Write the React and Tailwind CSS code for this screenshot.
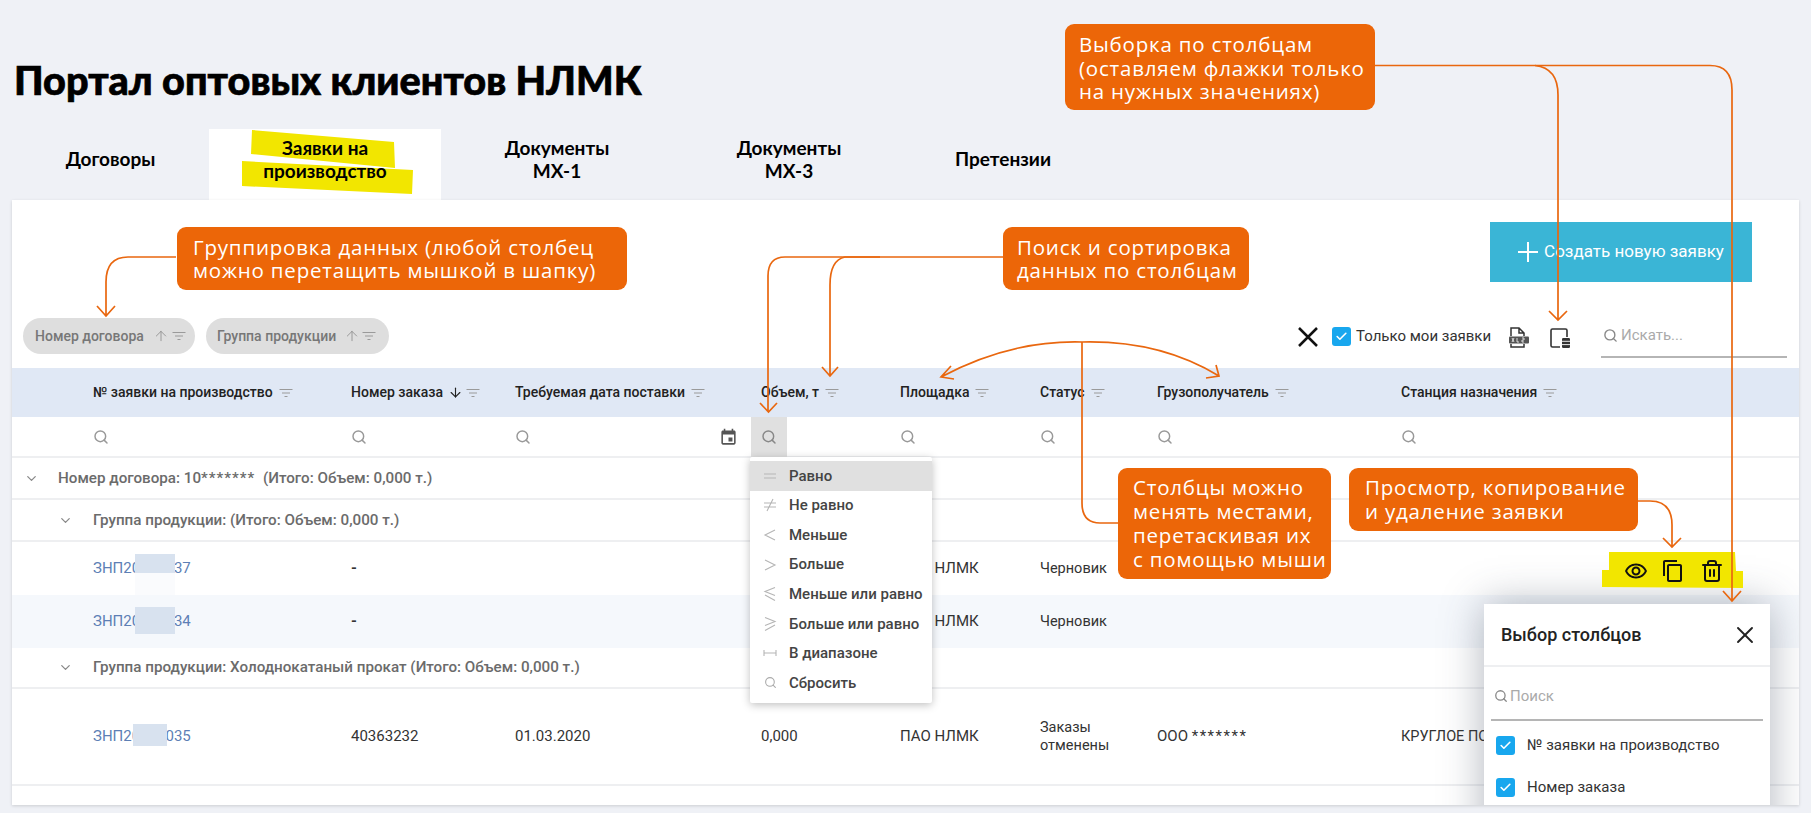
import React from 'react';
import { Search, ChevronDown, X, Check, ArrowUp, ArrowDown, Trash2 } from 'lucide-react';

const COLS = 'grid grid-cols-[81px_258px_164px_246px_139px_140px_117px_244px_398px]';

const FilterIcon = ({ className = '' }) => (
  <svg width="14" height="10" viewBox="0 0 14 10" className={className} fill="none" stroke="#9a9a9a" strokeWidth="1">
    <path d="M0.5 1.5h13M3 5h8M5.5 8.5h3" />
  </svg>
);

const Tick = ({ size }) => (
  <span className="flex items-center justify-center rounded-[3px] bg-[#18a7ee]" style={{ width: size, height: size }}>
    <Check size={size - 6} color="#fff" strokeWidth={3} />
  </span>
);

const Callout = ({ className, children }) => (
  <div className={`absolute rounded-[9px] bg-[#ec6608] text-white text-[20.5px] tracking-[0.8px] font-['Open_Sans',sans-serif] whitespace-pre ${className}`}>{children}</div>
);

const FilterCell = () => (
  <div className="flex items-center"><Search size={16} color="#999" strokeWidth={2.2} /></div>
);

const tabs = [
  { w: 'w-[197px]', label: 'Договоры' },
  { w: 'w-[232px]', label: 'Заявки на\nпроизводство', active: true },
  { w: 'w-[232px]', label: 'Документы\nМХ-1' },
  { w: 'w-[232px]', label: 'Документы\nМХ-3' },
  { w: 'w-[196px]', label: 'Претензии' },
];

const headers = [
  ['№ заявки на производство'],
  ['Номер заказа', true],
  ['Требуемая дата поставки'],
  ['Объем, т'],
  ['Площадка'],
  ['Статус'],
  ['Грузополучатель'],
  ['Станция назначения'],
];

const menu = [
  ['M1 5H13M1 9H13', 'Равно'],
  ['M1 5H13M1 9H13M10 1L4 13', 'Не равно'],
  ['M12 2L2 7L12 12', 'Меньше'],
  ['M2 2L12 7L2 12', 'Больше'],
  ['M12 0.500L2 4.500L12 8.500M2 8L12 13.500', 'Меньше или равно'],
  ['M2 0.500L12 4.500L2 8.500M12 8L2 13.500', 'Больше или равно'],
  ['M1 4V10M13 4V10M1 7H13', 'В диапазоне'],
  [null, 'Сбросить'],
];

const GroupRow = ({ indent, children, className }) => (
  <div className={`flex items-center text-[15.2px] font-medium text-[#6b6b6b] border-b-2 border-[#eeeff1] ${className}`}>
    <ChevronDown size={15} color="#888" className={indent ? 'ml-[46px] mr-[20px]' : 'ml-[12px] mr-[19px]'} />
    <span className="whitespace-pre">{children}</span>
  </div>
);

const DataRow = ({ num, patch, order, date, volume, status, cons, station, className = '' }) => (
  <div className={`${COLS} items-center text-[15px] text-[#333] ${className}`}>
    <div />
    <div className="relative text-[#5d7fb5]">
      <span>{num}</span>
      <span className={`absolute ${patch}`} />
    </div>
    <div className={order === '-' ? 'font-bold' : ''}>{order}</div>
    <div>{date}</div>
    <div>{volume}</div>
    <div>ПАО НЛМК</div>
    <div className="text-[14.5px] leading-[18px]">{status}</div>
    <div>{cons}</div>
    <div className="text-[14.5px]">{station}</div>
  </div>
);

export default function App() {
  return (
    <div className="relative w-[1811px] h-[813px] overflow-hidden bg-[#eff1f6] font-['Roboto',sans-serif]">
      <h1 className="pl-[14px] pt-[54px] h-[129px] text-[39.6px] leading-[52px] font-black text-black font-['Lato',sans-serif] [-webkit-text-stroke:0.7px_black]">
        Портал оптовых клиентов НЛМК
      </h1>

      {/* Tabs */}
      <div className="flex ml-[12px] h-[71px]">
        {tabs.map((t) => (
          <div
            key={t.label}
            className={`${t.w} relative flex items-center justify-center pb-[12px] text-center whitespace-pre-line text-[19px] leading-[23px] font-bold text-black font-['Lato',sans-serif] ${t.active ? 'bg-white' : ''}`}
          >
            {t.active && (
              <svg className="absolute left-0 top-0" width="232" height="71">
                <path d="M43 1L185 13L186 39L42 25ZM33 32L204 41L203 65L33 57Z" fill="#f2e600" />
              </svg>
            )}
            <span className="relative">{t.label}</span>
          </div>
        ))}
      </div>

      {/* Panel */}
      <div className="relative ml-[12px] w-[1787px] h-[605px] bg-white overflow-hidden shadow-[0_1px_3px_rgba(0,0,0,0.15)]">
        <div className="flex justify-end pt-[22px] pr-[47px]">
          <button className="flex items-center justify-center gap-[6px] w-[262px] h-[60px] bg-[#3ab5d6] text-white text-[17px]">
            <svg width="20" height="20" viewBox="0 0 20 20" stroke="#fff" strokeWidth="2"><path d="M10 0V20M0 10H20" /></svg>
            Создать новую заявку
          </button>
        </div>

        <div className="flex items-start justify-between h-[86px] pt-[36px] pl-[11px]">
          <div className="flex gap-[11px]">
            <div className="flex items-center h-[36px] w-[172px] pl-[12px] rounded-full bg-[#dedede] text-[14px] font-medium text-[#777]">
              Номер договора
              <ArrowUp size={16} strokeWidth={1.2} color="#888" className="ml-[9px]" />
              <FilterIcon className="ml-[3px]" />
            </div>
            <div className="flex items-center h-[36px] w-[183px] pl-[11px] rounded-full bg-[#dedede] text-[14px] font-medium text-[#777]">
              Группа продукции
              <ArrowUp size={16} strokeWidth={1.2} color="#888" className="ml-[8px]" />
              <FilterIcon className="ml-[2px]" />
            </div>
          </div>

          <div className="flex items-start pr-[12px]">
            <svg width="20" height="20" viewBox="0 0 20 20" stroke="#111" strokeWidth="2.500" className="mt-[9px]">
              <path d="M1 1L19 19M19 1L1 19" />
            </svg>
            <div className="ml-[14px] mt-[9px]"><Tick size={19} /></div>
            <span className="ml-[5px] mt-[9px] text-[15px] leading-[19px] text-[#333] w-[135px] whitespace-nowrap">Только мои заявки</span>
            <svg className="ml-[17px] mt-[9px]" width="22" height="22" viewBox="0 0 22 22" fill="none" stroke="#333" strokeWidth="1.5">
              <path d="M3 9V1h8l5 5v3M16 17v3H3v-3M11 1v5h5" />
              <rect x="1" y="9.5" width="20" height="7" rx="1" fill="#555" stroke="none" />
              <path d="M4 11l2 4M6 11l-2 4M9 11v4h2M14 11h2v2h-2v2h2" stroke="#fff" strokeWidth="0.8" />
            </svg>
            <svg className="ml-[19px] mt-[9px]" width="22" height="22" viewBox="0 0 22 22" fill="none" stroke="#333" strokeWidth="1.6">
              <path d="M11 20H3.5A1.5 1.5 0 0 1 2 18.500V3.500A1.500 1.500 0 0 1 3.500 2H16.500A1.500 1.500 0 0 1 18 3.500V10" />
              <rect x="13" y="11" width="8" height="10" rx="1.200" fill="#333" stroke="none" />
              <path d="M13 14.300h8M13 17.600h8" stroke="#fff" strokeWidth="0.9" />
            </svg>
            <div className="ml-[30px] w-[186px] h-[40px] border-b-2 border-[#b5b5b5] flex items-center gap-[3px] pl-[2px] pb-[4px] text-[15px] text-[#aaa]">
              <Search size={15} color="#888" strokeWidth={2.2} />
              Искать...
            </div>
          </div>
        </div>

        {/* Table head */}
        <div className={`${COLS} items-center h-[49px] bg-[#e0e8f5] text-[14px] font-medium text-[#222]`}>
          <div />
          {headers.map(([label, sorted]) => (
            <div key={label} className="flex items-center">
              <span>{label}</span>
              {sorted && <ArrowDown size={15} strokeWidth={1.8} className="ml-[5px]" />}
              <FilterIcon className={sorted ? 'ml-[3px]' : 'ml-[6px]'} />
            </div>
          ))}
        </div>

        {/* Filter row */}
        <div className={`${COLS} h-[41px] border-b-2 border-[#eeeff1]`}>
          <div />
          <FilterCell />
          <FilterCell />
          <div className="flex items-center justify-between pr-[23px]">
            <Search size={16} color="#999" strokeWidth={2.2} />
            <svg width="19" height="19" viewBox="0 0 24 24" fill="#555">
              <path d="M17 12h-5v5h5v-5zM16 1v2H8V1H6v2H5c-1.110 0-1.990.9-1.990 2L3 19c0 1.100.89 2 2 2h14c1.100 0 2-.9 2-2V5c0-1.100-.9-2-2-2h-1V1h-2zm3 18H5V8h14v11z" />
              <rect x="4" y="4" width="16" height="4" />
            </svg>
          </div>
          <div className="flex items-center">
            <div className="flex items-center justify-center w-[36px] h-[40px] -ml-[10px] bg-[#e0e0e0]"><Search size={16} color="#888" strokeWidth={2.2} /></div>
          </div>
          <FilterCell />
          <FilterCell />
          <FilterCell />
          <FilterCell />
        </div>

        <GroupRow className="h-[42px]">
          <span className="inline-block w-[205px]">Номер договора: 10<span className="tracking-[1px]">*******</span></span>
          (Итого: Объем: 0,000 т.)
        </GroupRow>
        <GroupRow indent className="h-[42px] border-b">Группа продукции: (Итого: Объем: 0,000 т.)</GroupRow>
        <DataRow className="h-[53px]" num="ЗНП20000037" patch="left-[42px] -top-[3px] w-[40px] h-[41px] bg-[linear-gradient(#d8e2ef_0_19px,#fafbfd_19px)]" order="-" status="Черновик" />
        <DataRow className="h-[53px] bg-[#f5f8fc]" num="ЗНП20000034" patch="left-[42px] -top-[3px] w-[40px] h-[27px] bg-[#d8e2ef]" order="-" status="Черновик" />
        <GroupRow indent className="h-[41px] border-b">Группа продукции: Холоднокатаный прокат (Итого: Объем: 0,000 т.)</GroupRow>
        <DataRow
          className="h-[97px] border-b-2 border-[#eeeff1]"
          num="ЗНП20000035"
          patch="left-[40px] -top-[1px] w-[34px] h-[22px] bg-[#d8e2ef]"
          order="40363232"
          date="01.03.2020"
          volume="0,000"
          status={<>Заказы<br />отменены</>}
          cons={<>ООО <span className="tracking-[1.5px]">*******</span></>}
          station="КРУГЛОЕ ПОЛУФАБРИКАТ"
        />

        {/* Column chooser */}
        <div className="absolute left-[1472px] top-[404px] w-[286px] h-[260px] bg-white shadow-[0_0_40px_rgba(60,70,90,0.4)]">
          <div className="flex items-center justify-between h-[63px] pl-[17px] pr-[11px] border-b-2 border-[#eeeff1] text-[18px] font-medium text-[#222]">
            Выбор столбцов
            <X size={28} strokeWidth={1.6} color="#222" />
          </div>
          <div className="mx-[7px] h-[54px] flex items-center gap-[2px] pl-[3px] pt-[6px] border-b-2 border-[#b5b5b5] text-[15px] text-[#aaa]">
            <Search size={14} color="#888" strokeWidth={2.2} />
            Поиск
          </div>
          <div className="flex items-center h-[19px] mt-[15px] ml-[12px] text-[15px] text-[#333]">
            <Tick size={19} />
            <span className="ml-[12px]">№ заявки на производство</span>
          </div>
          <div className="flex items-center h-[19px] mt-[23px] ml-[12px] text-[15px] text-[#333]">
            <Tick size={19} />
            <span className="ml-[12px]">Номер заказа</span>
          </div>
        </div>
      </div>

      {/* Operator dropdown */}
      <div className="absolute left-[750px] top-[457px] w-[182px] h-[246px] pt-[4px] bg-white rounded-[2px] shadow-[0_2px_8px_rgba(0,0,0,0.25)]">
        {menu.map(([sign, label], i) => (
          <div key={label} className={`flex items-center h-[29.6px] text-[15px] font-medium text-[#444] ${i === 0 ? 'bg-[#e0e0e0]' : ''}`}>
            <span className="flex items-center justify-center w-[39px] pl-[1px]">
              {sign ? (
                <svg width="14" height="14" viewBox="0 0 14 14" fill="none" stroke="#b5b5b5" strokeWidth="1.1"><path d={sign} /></svg>
              ) : (
                <Search size={13} color="#aaa" />
              )}
            </span>
            {label}
          </div>
        ))}
      </div>

      {/* Row actions with marker highlight */}
      <svg className="absolute left-[1602px] top-[552px]" width="141" height="37">
        <path d="M7 0H133L134 19H141V36L0 35V18H7Z" fill="#f2e600" />
      </svg>
      <div className="absolute left-[1624px] top-[559px] flex items-center gap-[13px]">
        <svg width="24" height="24" viewBox="0 0 24 24" fill="#111">
          <path d="M12 6.500c3.790 0 7.170 2.130 8.820 5.500-1.650 3.370-5.020 5.500-8.820 5.500S4.830 15.370 3.180 12C4.830 8.630 8.210 6.500 12 6.500m0-2C7 4.500 2.730 7.610 1 12c1.730 4.390 6 7.500 11 7.500s9.270-3.110 11-7.500c-1.730-4.390-6-7.500-11-7.500zm0 5c1.380 0 2.500 1.120 2.500 2.500s-1.120 2.500-2.500 2.500-2.500-1.120-2.500-2.500 1.120-2.500 2.500-2.500m0-2c-2.480 0-4.500 2.020-4.500 4.500s2.020 4.500 4.500 4.500 4.500-2.020 4.500-4.500-2.020-4.500-4.500-4.500z" />
        </svg>
        <svg width="24" height="24" viewBox="0 0 24 24" fill="#111">
          <path d="M16 1H4c-1.100 0-2 .9-2 2v14h2V3h12V1zm3 4H8c-1.100 0-2 .9-2 2v14c0 1.100.9 2 2 2h11c1.100 0 2-.9 2-2V7c0-1.100-.9-2-2-2zm0 16H8V7h11v14z" />
        </svg>
        <Trash2 size={24} color="#111" strokeWidth={2} className="ml-[2px]" />
      </div>

      {/* Annotation connectors */}
      <svg className="absolute left-0 top-0 pointer-events-none" width="1811" height="813" fill="none" stroke="#e9670f" strokeWidth="1.700">
        <path d="M176 257H128Q106 257 106 282V316M97 306L106 316L115 306" />
        <path d="M1003 257H785Q768 257 768 276V412M760 403L768.500 412L777 403" />
        <path d="M880 257H845Q830 260 830 285V376M822 367L830 376L838 367" />
        <path d="M1375 65.500H1710Q1732 65.500 1732 90V601M1723 591L1732 601L1741 591" />
        <path d="M1535 65.500Q1558 68 1558 95V320M1549 311L1558 320L1567 311" />
        <path d="M1118 523H1100Q1082 523 1082 503V342" />
        <path d="M941 377Q1010 340 1082 342Q1160 340 1219 376M951 366L941 377L954 379M1216 365L1219 376L1206 378" />
        <path d="M1638 501H1650Q1672 501 1672 525V547M1663 538L1672 547L1681 538" />
      </svg>

      {/* Callouts */}
      <Callout className="left-[177px] top-[227px] w-[450px] h-[63px] pl-[16px] pt-[9px] leading-[23px]">{'Группировка данных (любой столбец\nможно перетащить мышкой в шапку)'}</Callout>
      <Callout className="left-[1065px] top-[24px] w-[310px] h-[86px] pl-[14px] pt-[9px] leading-[23.5px]">{'Выборка по столбцам\n(оставляем флажки только\nна нужных значениях)'}</Callout>
      <Callout className="left-[1003px] top-[227px] w-[246px] h-[63px] pl-[14px] pt-[9px] leading-[23px]">{'Поиск и сортировка\nданных по столбцам'}</Callout>
      <Callout className="left-[1118px] top-[468px] w-[213px] h-[111px] pl-[15px] pt-[7px] leading-[24px]">{'Столбцы можно\nменять местами,\nперетаскивая их\nс помощью мыши'}</Callout>
      <Callout className="left-[1349px] top-[468px] w-[289px] h-[63px] pl-[16px] pt-[7px] leading-[24px]">{'Просмотр, копирование\nи удаление заявки'}</Callout>
    </div>
  );
}
